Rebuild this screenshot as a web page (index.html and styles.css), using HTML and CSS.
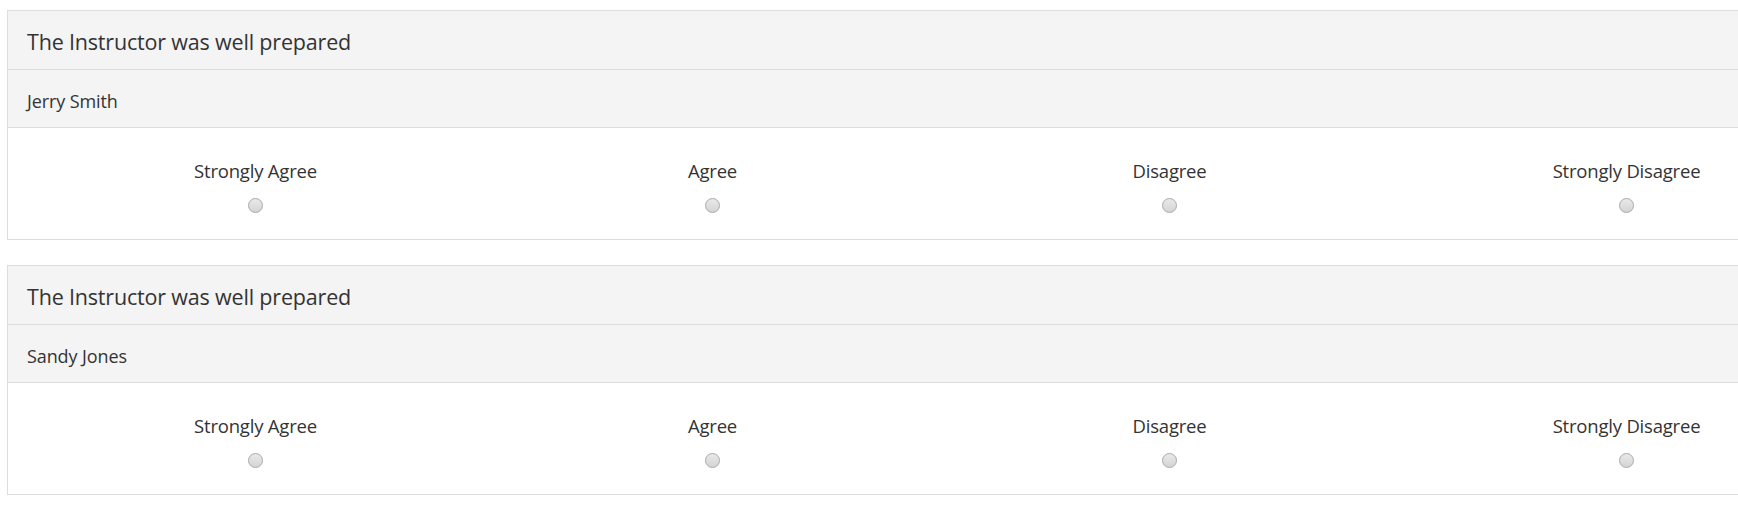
FILE: index.html
```html
<!DOCTYPE html>
<html lang="en">
<head>
<meta charset="utf-8">
<title>Survey</title>
<link rel="stylesheet" href="styles.css">
</head>
<body>
<div class="page">
  <section class="panel">
    <div class="panel-heading"><h3 class="panel-title">The Instructor was well prepared</h3></div>
    <div class="panel-sub">Jerry Smith</div>
    <div class="panel-body">
      <div class="choices">
        <label class="choice"><span class="choice-text">Strongly Agree</span><input type="radio" name="q1" class="radio"></label>
        <label class="choice"><span class="choice-text">Agree</span><input type="radio" name="q1" class="radio"></label>
        <label class="choice"><span class="choice-text">Disagree</span><input type="radio" name="q1" class="radio"></label>
        <label class="choice"><span class="choice-text">Strongly Disagree</span><input type="radio" name="q1" class="radio"></label>
      </div>
    </div>
  </section>
  <section class="panel">
    <div class="panel-heading"><h3 class="panel-title">The Instructor was well prepared</h3></div>
    <div class="panel-sub">Sandy Jones</div>
    <div class="panel-body">
      <div class="choices">
        <label class="choice"><span class="choice-text">Strongly Agree</span><input type="radio" name="q2" class="radio"></label>
        <label class="choice"><span class="choice-text">Agree</span><input type="radio" name="q2" class="radio"></label>
        <label class="choice"><span class="choice-text">Disagree</span><input type="radio" name="q2" class="radio"></label>
        <label class="choice"><span class="choice-text">Strongly Disagree</span><input type="radio" name="q2" class="radio"></label>
      </div>
    </div>
  </section>
</div>
</body>
</html>
```
FILE: styles.css
```css
html, body {
  margin: 0;
  padding: 0;
  overflow: hidden;
  background: #fff;
}
body {
  font-family: "Open Sans", "Noto Sans", "Liberation Sans", sans-serif;
  color: #333;
}
.page {
  padding: 10px 0 0 7px;
  width: 1880px;
}
.panel {
  border: 1px solid #ddd;
  margin-bottom: 25px;
  background: #fff;
}
.panel-heading {
  height: 58px;
  background: #f4f4f4;
  border-bottom: 1px solid #ddd;
  display: flex;
  align-items: center;
  padding: 0 19px;
}
.panel-title {
  margin: 0;
  font-weight: 400;
  font-size: 21.5px;
  line-height: 1;
  letter-spacing: -0.18px;
  padding-top: 3px;
}
.panel-sub {
  background: #f4f4f4;
  border-bottom: 1px solid #ddd;
  display: flex;
  align-items: center;
  padding: 4px 19px 0;
  font-size: 18px;
  letter-spacing: -0.1px;
  box-sizing: border-box;
  height: 58px;
}
.panel-body {
  padding: 29px 0 0 19px;
  box-sizing: border-box;
  height: 111px;
}
.choices {
  display: grid;
  grid-template-columns: repeat(4, 457px);
}
.choice {
  display: flex;
  flex-direction: column;
  align-items: center;
}
.choice-text {
  font-size: 18.5px;
  line-height: 28px;
  letter-spacing: -0.2px;
}
.radio {
  appearance: none;
  -webkit-appearance: none;
  margin: 13px 0 0 0;
  width: 15px;
  height: 15px;
  border-radius: 50%;
  border: 1px solid #a9a9a9;
  background: linear-gradient(#e9e9e9, #d4d4d4);
  box-sizing: border-box;
}
```
